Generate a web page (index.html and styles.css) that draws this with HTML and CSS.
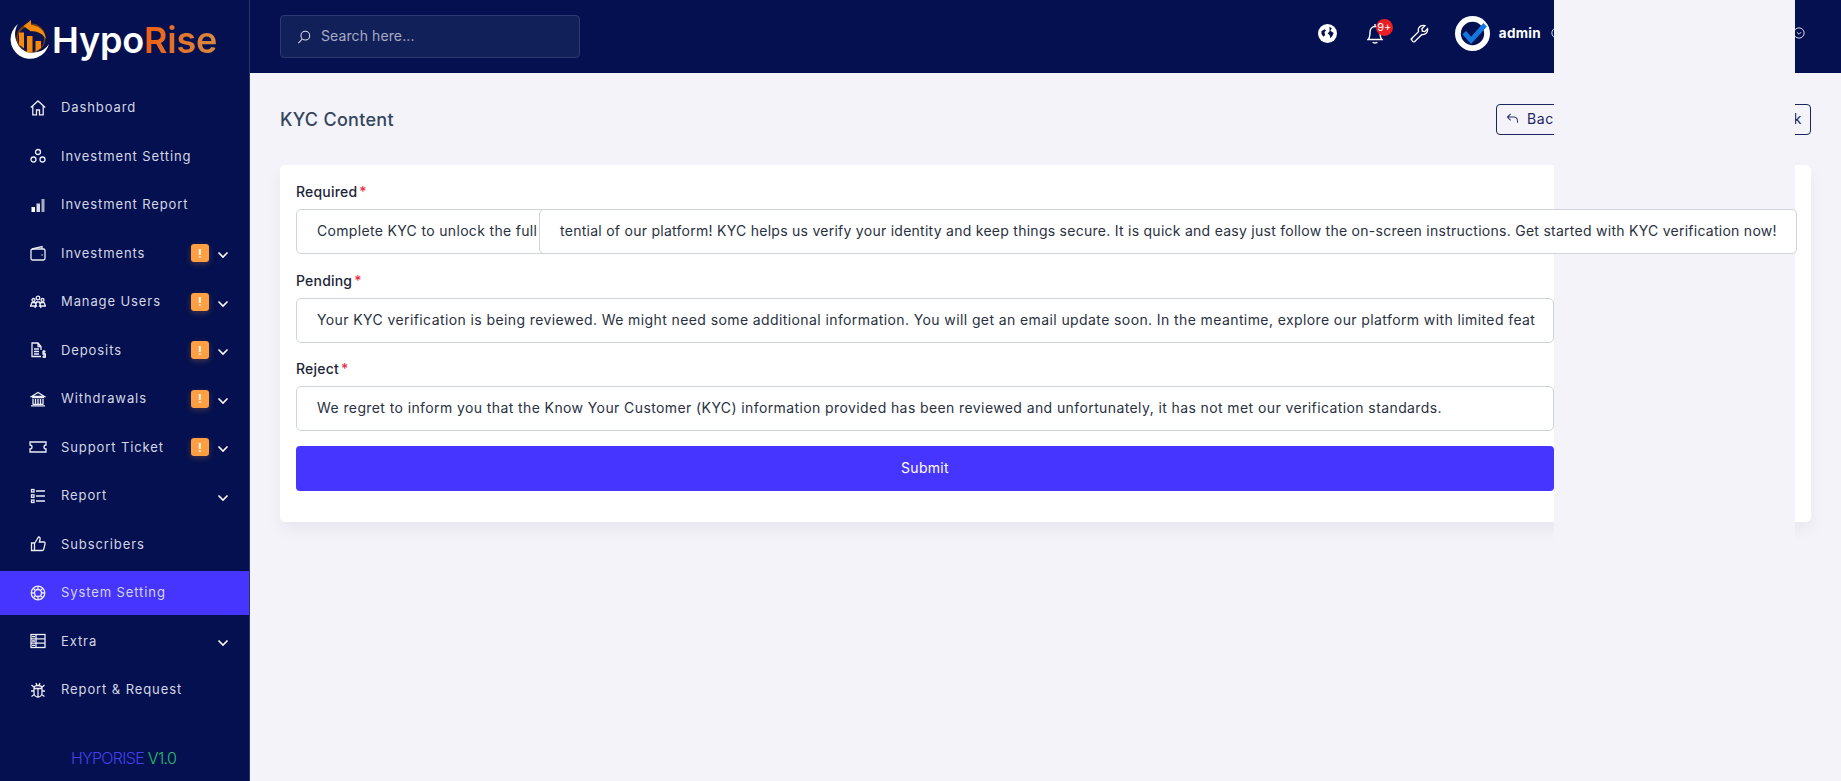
FILE: index.html
```html
<!DOCTYPE html>
<html lang="en">
<head>
<meta charset="utf-8">
<title>KYC Content</title>
<link rel="stylesheet" href="styles.css">
</head>
<body>
<div class="app">
  <aside class="sidebar">
    <div class="logo">
      <svg class="logo-mark" viewBox="0 0 42 42" width="42" height="42">
        <path d="M8 4 A19.500 19.500 0 1 0 39 24 A15 15 0 0 1 8 4Z" fill="#fff"/>
        <circle cx="21" cy="18" r="14.500" fill="#7a3f10"/>
        <circle cx="21" cy="19" r="13" fill="#0b1450"/>
        <path d="M9 12.500h5v16l-5-4zM17 16h5.500v16.500H17zM25.500 21H31v7l-5.500 4z" fill="#f58a0b"/>
        <path d="M20 5c8 0 15 5 16 14-3-5-8-8-16-8z" fill="#f58a0b"/>
        <path d="M21 0 13.500 6 21 11.500z" fill="#f58a0b"/>
      </svg>
      <div class="logo-text"><span class="hypo">Hypo</span><span class="rise">Rise</span></div>
    </div>
    <nav class="menu">
      <a class="item"><svg class="ico" viewBox="0 0 16 16"><path d="M.8 7.500 8 1l7.200 6.500M2.800 6v8.800h3.700V10h3v4.800h3.700V6"/></svg><span class="label">Dashboard</span></a>
      <a class="item"><svg class="ico" viewBox="0 0 16 16"><circle cx="8" cy="4" r="2.500"/><circle cx="3.500" cy="11.500" r="2.500"/><circle cx="12.500" cy="11.500" r="2.500"/></svg><span class="label">Investment Setting</span></a>
      <a class="item"><svg class="ico" viewBox="0 0 16 16"><path class="bar-a" d="M1.500 10h3.500v5H1.500z"/><path class="bar-b" d="M6.500 6.500H10V15H6.500z"/><path class="bar-c" d="M11.500 2H14.500V15H11.500z"/></svg><span class="label">Investment Report</span></a>
      <a class="item"><svg class="ico" viewBox="0 0 16 16"><rect x="1" y="4" width="14" height="11" rx="1.500"/><path d="M2 4l10-2.500V4M11.500 10h1"/></svg><span class="label">Investments</span><span class="badge">!</span><svg class="chev" viewBox="0 0 12 8"><path d="M1.500 1.500 6 6l4.500-4.500"/></svg></a>
      <a class="item"><svg class="ico" viewBox="0 0 16 16"><circle cx="8" cy="4" r="1.800"/><circle cx="3.500" cy="6" r="1.500"/><circle cx="12.500" cy="6" r="1.500"/><path d="M.5 12l1.500-3.500h3L6.500 12zM9.500 12 11 8.500h3l1.500 3.500zM5 14l1.500-6h3L11 14"/></svg><span class="label">Manage Users</span><span class="badge">!</span><svg class="chev" viewBox="0 0 12 8"><path d="M1.500 1.500 6 6l4.500-4.500"/></svg></a>
      <a class="item"><svg class="ico" viewBox="0 0 16 16"><path d="M11 14.500H2V1h6l3 3.500V8M8 1v3.500h3M4 7h5M4 9.500h5M4 12h5"/><path d="M15.500 9.500h-2.500v2.500h2.500v3H12.500M14 8v8.500"/></svg><span class="label">Deposits</span><span class="badge">!</span><svg class="chev" viewBox="0 0 12 8"><path d="M1.500 1.500 6 6l4.500-4.500"/></svg></a>
      <a class="item"><svg class="ico" viewBox="0 0 16 16"><path d="M1.500 5.500 8 1.500l6.500 4zM3 8v5M5.500 8v5M8 8v5M10.500 8v5M13 8v5M2 6.500h12M1 14.800h14M2.500 13.300h11"/></svg><span class="label">Withdrawals</span><span class="badge">!</span><svg class="chev" viewBox="0 0 12 8"><path d="M1.500 1.500 6 6l4.500-4.500"/></svg></a>
      <a class="item"><svg class="ico ticket" viewBox="0 0 18 16"><path d="M1 3h16v3a2 2 0 0 0 0 4v3H1v-3a2 2 0 0 0 0-4z"/></svg><span class="label">Support Ticket</span><span class="badge">!</span><svg class="chev" viewBox="0 0 12 8"><path d="M1.500 1.500 6 6l4.500-4.500"/></svg></a>
      <a class="item"><svg class="ico" viewBox="0 0 16 16"><path d="M6 3h9M6 8h9M6 13h9"/><rect x="1.500" y="1.500" width="2.500" height="2.500"/><rect x="1.500" y="6.800" width="2.500" height="2.500"/><rect x="1.500" y="12" width="2.500" height="2.500"/></svg><span class="label">Report</span><svg class="chev" viewBox="0 0 12 8"><path d="M1.500 1.500 6 6l4.500-4.500"/></svg></a>
      <a class="item"><svg class="ico" viewBox="0 0 16 16"><path d="M1.500 7h3v7.500h-3zM4.500 7.500 8.500 1c1.500 0 2 1.200 1.500 2.500L9.300 6H14c1 0 1.200 1 1 1.800l-1.300 5.500c-.2.800-.8 1.200-1.500 1.200H4.500"/></svg><span class="label">Subscribers</span></a>
      <a class="item active"><svg class="ico" viewBox="0 0 16 16"><circle cx="8" cy="8" r="6.800"/><circle cx="8" cy="8" r="3.500"/><path d="M8 1.500v3M8 11.500v3M1.500 8h3M11.500 8h3M3.500 3.500l2 2M10.500 10.500l2 2M12.500 3.500l-2 2M5.500 10.500l-2 2"/></svg><span class="label">System Setting</span></a>
      <a class="item"><svg class="ico" viewBox="0 0 16 16"><rect x="1" y="1.500" width="14" height="13"/><path d="M1 5.800h14M1 10.200h14M6 1.500v13M2 3.600h3M2 8h3M2 12.300h3"/></svg><span class="label">Extra</span><svg class="chev" viewBox="0 0 12 8"><path d="M1.500 1.500 6 6l4.500-4.500"/></svg></a>
      <a class="item"><svg class="ico" viewBox="0 0 16 16"><path d="M4 6.500C4 4 6 3.500 8 3.500s4 .5 4 3V11a4 4 0 0 1-8 0zM8 6v9M1.500 3l2.800 2.500M14.500 3l-2.800 2.500M1 9h3M12 9h3M1.500 14.500 4.300 12.500M14.500 14.500l-2.800-2M6 1l1 2.500M10 1 9 3.500M4 6.500h8"/></svg><span class="label">Report &amp; Request</span></a>
    </nav>
    <div class="version"><span class="v-name">HYPORISE</span>&nbsp;<span class="v-num">V1.0</span></div>
  </aside>
  <div class="main">
    <header class="topbar">
      <div class="search">
        <svg class="search-ico" viewBox="0 0 16 16"><circle cx="9.500" cy="6.500" r="5"/><path d="M6 10.500 1.500 15"/></svg>
        <span class="search-text">Search here...</span>
      </div>
      <div class="top-right">
        <svg class="globe" viewBox="0 0 20 20"><circle cx="10" cy="10" r="10" fill="#fff"/><path d="M3.500 7.500 7 5.500 8.500 7 6.800 8.500l.7 3-1.800 2-2-3zM12 3l2.500 1.500-1.500 2.500 3.500 2.500-1.500 3-2 2.500-.8-3.500-2-1.500 2-2.500z" fill="#04104f"/></svg>
        <div class="bell">
          <svg viewBox="0 0 16 21" width="16" height="21"><path d="M1 16.500c1.500-1.500 2-3 2-7 0-3.500 2-6 5-6s5 2.500 5 6c0 4 .5 5.500 2 7zM5.800 19c.5 1.300 4 1.300 4.500 0M8 1v2.500"/></svg>
          <span class="bell-count">9+</span>
        </div>
        <svg class="wrench" viewBox="0 0 20 20"><path d="M1.500 15.500 9 8c-1-3 1-6.500 5-6.500.6 0 1.200.1 1.700.3L12.500 5l.5 2.500 2.500.5 3-3c.5 4-2.500 6.800-6 6l-7.500 7.500c-1.500 1-4-1.300-3-3z"/></svg>
        <svg class="avatar" viewBox="0 0 36 36"><circle cx="18" cy="18" r="18" fill="#fff"/><circle cx="18" cy="18" r="12" fill="#04104f"/><path d="M9.500 17l7 8L31 9" fill="none" stroke="#1478e0" stroke-width="5"/></svg>
        <span class="user">admin</span>
        <svg class="circle-chev" viewBox="0 0 14 14"><circle cx="7" cy="7" r="6"/><path d="M4.500 6 7 8.500 9.500 6"/></svg>
        <svg class="circle-chev end" viewBox="0 0 14 14"><circle cx="7" cy="7" r="6"/><path d="M4.500 6 7 8.500 9.500 6"/></svg>
      </div>
    </header>
    <main class="content">
      <div class="page-head">
        <h1 class="title">KYC Content</h1>
        <a class="back">
          <svg class="back-ico" viewBox="0 0 14 14"><path d="M5 2 1.500 5.500 5 9M1.500 5.500H9c2.500 0 3.500 2 3.500 6"/></svg>
          <span class="back-label">Back</span>
          <span class="back-label end">Back</span>
        </a>
      </div>
      <section class="card">
        <form class="form">
          <div class="group">
            <label class="field-label">Required<span class="req">*</span></label>
            <div class="input">Complete KYC to unlock the full</div>
          </div>
          <div class="group">
            <label class="field-label">Pending<span class="req">*</span></label>
            <div class="input wide">Your KYC verification is being reviewed. We might need some additional information. You will get an email update soon. In the meantime, explore our platform with limited feat</div>
          </div>
          <div class="group last">
            <label class="field-label">Reject<span class="req">*</span></label>
            <div class="input wide">We regret to inform you that the Know Your Customer (KYC) information provided has been reviewed and unfortunately, it has not met our verification standards.</div>
          </div>
          <div class="submit">Submit</div>
        </form>
      </section>
    </main>
  </div>
</div>
<div class="patch"></div>
<div class="input floating">tential of our platform! KYC helps us verify your identity and keep things secure. It is quick and easy just follow the on-screen instructions. Get started with KYC verification now!</div>
</body>
</html>
```
FILE: styles.css
```css
* { box-sizing: border-box; }
html, body { margin: 0; height: 781px; overflow: hidden; }
body { font-family: "Inter", "Liberation Sans", sans-serif; background: #f3f3f9; position: relative; }
.app { display: flex; height: 781px; }

.sidebar { width: 250px; flex: none; background: #04104f; border-right: 1px solid #2a3468; display: flex; flex-direction: column; }
.logo { height: 73px; display: flex; align-items: center; padding: 9px 0 0 10px; }
.logo-mark { flex: none; }
.logo-text { font-size: 36px; font-weight: 600; line-height: 1; margin: 0 0 3px 0; letter-spacing: -.2px; }
.hypo { color: #fff; }
.rise { background: linear-gradient(90deg, #ee5f15, #d98a42); -webkit-background-clip: text; background-clip: text; color: transparent; }

.menu { display: flex; flex-direction: column; gap: 4.500px; padding-top: 12.500px; }
.item { height: 44px; display: flex; align-items: center; padding: 0 20px 0 30px; color: #d4d6e4; }
.item.active { background: #4634ff; }
.ico { width: 16px; height: 16px; flex: none; fill: none; stroke: #ecedf4; stroke-width: 1.300; margin-right: 15px; }
.ico.ticket { width: 18px; margin: 0 14px 0 -1px; }
.bar-a { fill: #fff; stroke: none; }
.bar-b { fill: #d8dae6; stroke: none; }
.bar-c { fill: #a9adc4; stroke: none; }
.label { font-size: 13px; letter-spacing: .9px; flex: 1; white-space: nowrap; margin-top: -1px; }
.badge { width: 18px; height: 18px; border-radius: 3px; background: #ff9f43; color: #fff; font-size: 12px; font-weight: 600; display: flex; align-items: center; justify-content: center; box-shadow: 0 2px 6px rgba(255,159,67,.25); margin-right: 8px; }
.chev { width: 12px; height: 8px; flex: none; fill: none; stroke: #fff; stroke-width: 1.600; margin-top: 4px; }
.version { margin-top: auto; height: 46px; display: flex; align-items: center; justify-content: center; font-size: 16px; font-weight: 300; letter-spacing: -.7px; padding-right: 2px; }
.v-name { color: #4440f0; }
.v-num { color: #1fc468; }

.main { flex: 1; min-width: 0; display: flex; flex-direction: column; }
.topbar { height: 73px; background: #04104f; display: flex; align-items: center; justify-content: space-between; padding: 0 36px 0 30px; }
.search { width: 300px; height: 43px; background: #12205a; border: 1px solid #2d3a72; border-radius: 4px; display: flex; align-items: center; padding: 0 0 0 16px; }
.search-ico { width: 14px; height: 14px; fill: none; stroke: #d8dae6; stroke-width: 1.200; margin-right: 10px; }
.search-text { font-size: 14px; letter-spacing: .1px; color: #a6abc3; margin-top: -2px; }

.top-right { display: flex; align-items: center; margin-bottom: 7px; }
.globe { width: 19px; height: 19px; margin-right: 30px; }
.bell { position: relative; width: 16px; height: 21px; margin-right: 27px; }
.bell svg { fill: none; stroke: #fff; stroke-width: 1.400; display: block; }
.bell-count { position: absolute; left: 9px; top: -4px; width: 17px; height: 17px; border-radius: 50%; background: #ea1f25; color: #fff; font-size: 11px; display: flex; align-items: center; justify-content: center; }
.wrench { width: 19px; height: 19px; fill: none; stroke: #fff; stroke-width: 1.400; margin-right: 26px; }
.avatar { width: 35px; height: 35px; margin-right: 9px; }
.user { color: #fff; font-size: 13.500px; font-weight: 700; letter-spacing: .3px; margin-right: 10px; }
.circle-chev { width: 12px; height: 12px; fill: none; stroke: #e6e7f0; stroke-width: 1.100; margin-right: 230px; }
.circle-chev.end { margin-right: 0; }

.content { flex: 1; padding: 0 30px; }
.page-head { height: 92px; display: flex; align-items: center; justify-content: space-between; padding-top: 1px; }
.title { margin: 0; font-size: 18px; font-weight: 500; letter-spacing: .3px; color: #34465e; }
.back { width: 315px; height: 31px; border: 1px solid #1b2560; border-radius: 4px; display: flex; align-items: center; padding: 0 8px 2px 9px; color: #1b2560; font-size: 14px; letter-spacing: .6px; }
.back-ico { width: 13px; height: 13px; fill: none; stroke: #2a3468; stroke-width: 1.100; margin-right: 8px; }
.back-label.end { margin-left: auto; }

.card { background: #fff; border-radius: 5px; padding: 16px 257px 31px 16px; box-shadow: 0 8px 16px rgba(0,0,0,.05); }
.form { display: flex; flex-direction: column; }
.group { display: flex; flex-direction: column; margin-bottom: 15.500px; }
.group.last { margin-bottom: 14.500px; }
.field-label { height: 28px; font-size: 14px; font-weight: 500; letter-spacing: .2px; color: #1c2538; line-height: 22px; }
.req { color: #ea2f45; margin-left: 2px; }
.input { height: 45px; border: 1px solid #ced4da; border-radius: 5px; background: #fff; padding: 0 20px 2px; display: flex; align-items: center; font-size: 14px; letter-spacing: .33px; color: #293142; white-space: nowrap; overflow: hidden; }
.input.wide { letter-spacing: .4px; }
.submit { height: 45px; background: #4634ff; color: #fff; border-radius: 4px; padding-bottom: 2px; display: flex; align-items: center; justify-content: center; font-size: 14px; letter-spacing: .3px; }

.patch { position: absolute; left: 1554px; top: 0; width: 241px; height: 546px; background: #f3f3f9; }
.floating { position: absolute; left: 539px; top: 209px; width: 1258px; letter-spacing: .265px; }
```
